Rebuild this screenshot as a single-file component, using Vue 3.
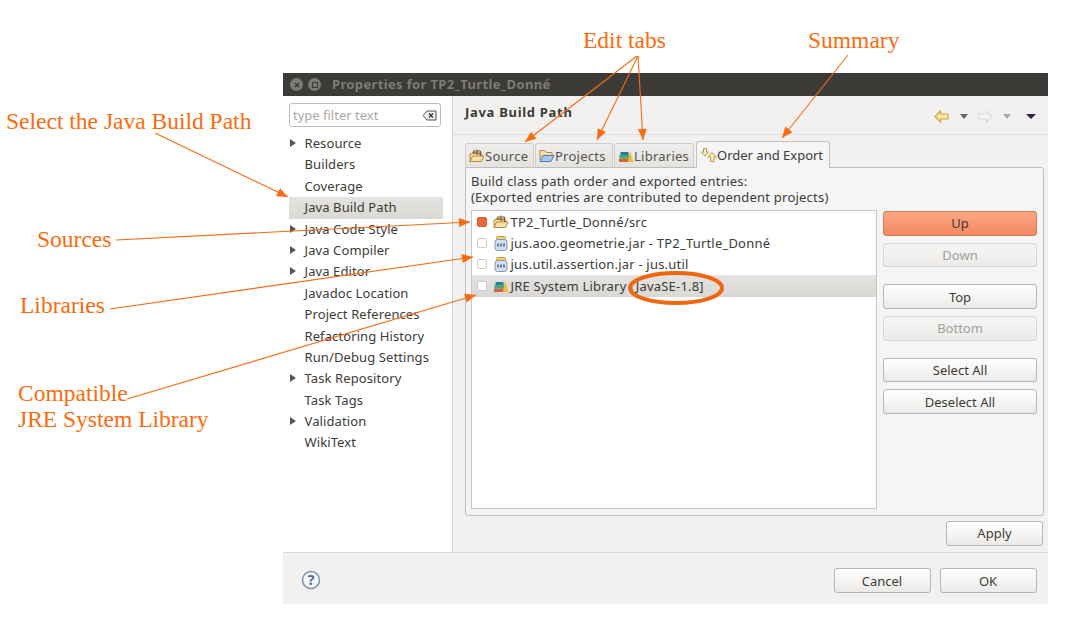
<script setup>
const tree = [
  { t: 'Resource', a: 1 }, { t: 'Builders' }, { t: 'Coverage' }, { t: 'Java Build Path', s: 1 },
  { t: 'Java Code Style', a: 1 }, { t: 'Java Compiler', a: 1 }, { t: 'Java Editor', a: 1 },
  { t: 'Javadoc Location' }, { t: 'Project References' }, { t: 'Refactoring History' },
  { t: 'Run/Debug Settings' }, { t: 'Task Repository', a: 1 }, { t: 'Task Tags' },
  { t: 'Validation', a: 1 }, { t: 'WikiText' }
]
const tabs = [
  { t: 'Source', i: 'src', w: 69 }, { t: 'Projects', i: 'prj', w: 78 }, { t: 'Libraries', i: 'lib', w: 80 }
]
const rows = [
  { t: 'TP2_Turtle_Donné/src', i: 'src', on: 1 },
  { t: 'jus.aoo.geometrie.jar - TP2_Turtle_Donné', i: 'jar' },
  { t: 'jus.util.assertion.jar - jus.util', i: 'jar' },
  { t: 'JRE System Library [JavaSE-1.8]', i: 'lib', sel: 1 }
]
const labels = [
  { t: 'Edit tabs', x: 583, y: 27 }, { t: 'Summary', x: 808, y: 27 },
  { t: 'Select the Java Build Path', x: 6, y: 108 }, { t: 'Sources', x: 37, y: 226 },
  { t: 'Libraries', x: 20, y: 292 }, { t: 'Compatible', x: 18, y: 380 },
  { t: 'JRE System Library', x: 18, y: 406 }
]
const arrows = [
  [155, 133, 288, 197], [116, 240, 470, 222], [110, 309, 473, 257], [127, 399, 476, 295],
  [637, 56, 525, 142], [638, 56, 597, 140], [638, 56, 643, 140], [848, 55, 782, 138]
]
function head(a) {
  const [x1, y1, x2, y2] = a
  const l = Math.hypot(x2 - x1, y2 - y1)
  const ux = (x2 - x1) / l, uy = (y2 - y1) / l
  const bx = x2 - ux * 11, by = y2 - uy * 11
  return `${x2},${y2} ${bx - uy * 4.5},${by + ux * 4.5} ${bx + uy * 4.5},${by - ux * 4.5}`
}
</script>

<template>
  <div class="page">
    <section class="window">
      <header class="titlebar">
        <span class="wbtn"><svg width="12" height="12" viewBox="0 0 12 12"><path d="M4 4l4 4M8 4l-4 4" stroke="#3c3b37" stroke-width="1.4"/></svg></span>
        <span class="wbtn"><svg width="12" height="12" viewBox="0 0 12 12"><rect x="3.5" y="3.5" width="5" height="5" fill="none" stroke="#3c3b37"/></svg></span>
        <span class="wtitle">Properties for TP2_Turtle_Donné</span>
      </header>

      <div class="main">
        <aside class="side">
          <div class="filter">
            <span>type filter text</span>
            <svg width="15" height="11" viewBox="0 0 15 11"><path d="M1 5.5L5 1h9v9H5z" fill="#eee" stroke="#555"/><path d="M7 3.5l4 4M11 3.5l-4 4" stroke="#333" stroke-width="1.3"/></svg>
          </div>
          <ul class="tree">
            <li v-for="n in tree" :key="n.t" :class="['node', { selected: n.s }]">
              <i v-if="n.a" class="twist"></i>{{ n.t }}
            </li>
          </ul>
        </aside>

        <div class="content">
          <div class="head">
            <h1>Java Build Path</h1>
            <div class="nav">
              <svg width="15" height="13" viewBox="0 0 15 13"><path d="M1 6.500L6.500 1v3h7.500v5H6.500v3z" fill="#fdeaa8" stroke="#d9a13a" stroke-width="1.200"/></svg>
              <i class="drop dark"></i>
              <svg width="15" height="13" viewBox="0 0 15 13"><path d="M14 6.500L8.500 1v3H1v5h7.500v3z" fill="#f4f4f4" stroke="#dcdcdc" stroke-width="1.200"/></svg>
              <i class="drop pale"></i>
              <i class="drop navy"></i>
            </div>
          </div>

          <div class="body">
            <div class="tabs">
              <div v-for="t in tabs" :key="t.t" class="tab" :style="{ width: t.w + 'px' }">
                <svg v-if="t.i === 'src'" class="ico" width="16" height="14" viewBox="0 0 16 14"><path d="M1 12.500V5h1l1-1h4l1 1h5v2" fill="#f3dca6" stroke="#b58a45"/><path d="M1 12.500L3.500 7H15l-2.500 5.500z" fill="#f6e0a8" stroke="#b58a45"/><path d="M4.500 5V2h7v5M8 .5V6M3.500 4h9" stroke="#7c5a25" fill="none"/></svg>
                <svg v-else-if="t.i === 'prj'" class="ico" width="16" height="14" viewBox="0 0 16 14"><path d="M1 11V1.500h5l1.500 2H13V6" fill="#f3dca6" stroke="#b58a45"/><path d="M1 12.500L4 6.500h11l-3 6z" fill="#a9c4ec" stroke="#5577b0"/></svg>
                <svg v-else class="ico" width="16" height="14" viewBox="0 0 16 14"><rect x="1" y="9.500" width="10" height="3.500" fill="#c9683f"/><rect x="1.500" y="6" width="9.500" height="3.500" fill="#49a578"/><rect x="2.500" y="3" width="8" height="3" fill="#2f7a96"/><path d="M10 13L12 1.500 15.500 13z" fill="#eebf45"/></svg>
                <span class="tt">{{ t.t }}</span>
              </div>
              <div class="tab active">
                <svg class="ico" width="16" height="14" viewBox="0 0 16 14"><path d="M2.500.5h3v3.500h2L4 8 .5 4h2z" fill="#fbeeb5" stroke="#b58a45" stroke-width=".9"/><path d="M11 4.500l4.500 4.500h-2.500v4.500H9.500V9H7z" fill="#fbeeb5" stroke="#b58a45" stroke-width=".9"/></svg>
                Order and Export
              </div>
            </div>

            <div class="panel">
              <p class="desc">Build class path order and exported entries:<br>(Exported entries are contributed to dependent projects)</p>
              <div class="split">
                <div class="list">
                  <div v-for="r in rows" :key="r.t" :class="['row', { sel: r.sel }]">
                    <span :class="['check', { on: r.on }]"></span>
                    <svg v-if="r.i === 'src'" class="ri" width="16" height="14" viewBox="0 0 16 14"><path d="M1 12.500V5h1l1-1h4l1 1h5v2" fill="#f3dca6" stroke="#b58a45"/><path d="M1 12.500L3.500 7H15l-2.500 5.500z" fill="#f6e0a8" stroke="#b58a45"/><path d="M4.500 5V2h7v5M8 .5V6M3.500 4h9" stroke="#7c5a25" fill="none"/></svg>
                    <svg v-else-if="r.i === 'jar'" class="ri" width="16" height="15" viewBox="0 0 16 15"><rect x="3.500" y="0.500" width="9" height="3" rx="1" fill="#f2cf6b" stroke="#c79a35"/><rect x="2" y="3.500" width="12" height="11" rx="2.500" fill="#d3deee" stroke="#8296b5"/><path d="M4 9h8" stroke="#6b7f9f" stroke-width="3" stroke-dasharray="2 1"/></svg>
                    <svg v-else class="ri" width="16" height="14" viewBox="0 0 16 14"><rect x="1" y="9.500" width="10" height="3.500" fill="#c9683f"/><rect x="1.500" y="6" width="9.500" height="3.500" fill="#49a578"/><rect x="2.500" y="3" width="8" height="3" fill="#2f7a96"/><path d="M10 13L12 1.500 15.500 13z" fill="#eebf45"/></svg>
                    <span>{{ r.t }}</span>
                  </div>
                </div>
                <div class="btns">
                  <button class="btn hot">Up</button>
                  <button class="btn off">Down</button>
                  <button class="btn gap">Top</button>
                  <button class="btn off">Bottom</button>
                  <button class="btn gap">Select All</button>
                  <button class="btn">Deselect All</button>
                </div>
              </div>
            </div>
            <div class="applyrow"><button class="btn wide">Apply</button></div>
          </div>
        </div>
      </div>

      <footer class="foot">
        <svg class="help" width="20" height="20" viewBox="0 0 20 20"><circle cx="10" cy="10" r="8.500" fill="#f4f6fa" stroke="#7f8fab" stroke-width="1.500"/><text x="10" y="15" text-anchor="middle" class="q">?</text></svg>
        <div class="footbtns">
          <button class="btn wide">Cancel</button>
          <button class="btn wide">OK</button>
        </div>
      </footer>
    </section>

    <div v-for="l in labels" :key="l.t" class="note" :style="{ left: l.x + 'px', top: l.y + 'px' }">{{ l.t }}</div>
    <svg class="over" width="1072" height="624" viewBox="0 0 1072 624">
      <g v-for="(a, i) in arrows" :key="i">
        <line :x1="a[0]" :y1="a[1]" :x2="a[2]" :y2="a[3]" stroke="#f96a10" stroke-width="1.100"/>
        <polygon :points="head(a)" fill="#f96a10"/>
      </g>
      <ellipse cx="676" cy="288" rx="46" ry="15" fill="none" stroke="#f26610" stroke-width="4"/>
    </svg>
  </div>
</template>

<style>
html, body { margin: 0; background: #fff; }
</style>

<style scoped>
.page { position: relative; width: 1072px; height: 624px; overflow: hidden; background: #fff; padding: 73px 24px 0 283px; box-sizing: border-box; font-family: "Noto Sans", sans-serif; font-size: 13px; color: #3c3b37; }
.window { width: 765px; height: 531px; display: flex; flex-direction: column; background: #f2f1f0; }
.titlebar { height: 23px; background: #3c3b37; display: flex; align-items: center; padding-left: 7px; gap: 5px; flex: none; }
.wbtn { width: 13px; height: 13px; border-radius: 50%; background: #7b7a75; display: flex; align-items: center; justify-content: center; }
.wtitle { margin: 0 0 1px 6px; color: #7d7c77; font-weight: 700; font-size: 13px; letter-spacing: .36px; }
.main { flex: 1; display: flex; min-height: 0; }
.side { background: #fff; border-right: 1px solid #d6d3cf; flex: none; padding: 7px 9px 0 6px; box-sizing: content-box; width: 154px; }
.filter { height: 22px; border: 1px solid #bfbcb7; border-radius: 3px; display: flex; align-items: center; justify-content: space-between; padding: 0 3px; box-sizing: content-box; width: 144px; color: #aaa8a4; font-size: 13px; }
.tree { list-style: none; margin: 6px 0 0; padding: 0; letter-spacing: .1px; }
.node { height: 21.4px; line-height: 21.4px; padding-left: 15.5px; position: relative; white-space: nowrap; }
.node.selected { background: linear-gradient(#e4e3e1, #d9d8d5); }
.twist { position: absolute; left: 1px; top: 6px; border-left: 6px solid #555; border-top: 4px solid transparent; border-bottom: 4px solid transparent; }
.content { flex: 1; display: flex; flex-direction: column; min-width: 0; }
.head { height: 39px; flex: none; display: flex; align-items: center; justify-content: space-between; padding: 0 12px 0 12px; border-bottom: 1px solid #e2e0dd; box-sizing: border-box; }
.head h1 { margin: 0 0 6px; font-size: 13px; font-weight: 700; letter-spacing: .7px; }
.nav { display: flex; align-items: center; gap: 10px; margin-top: 3px; }
.drop { border-top: 5px solid #666; border-left: 4px solid transparent; border-right: 4px solid transparent; width: 0; height: 0; }
.drop.dark { margin-left: 1px; }
.drop.pale { border-top-color: #aaa; }
.drop.navy { border-top-color: #2f1f55; border-left-width: 5px; border-right-width: 5px; margin-left: 5px; }
.body { flex: 1; padding: 6px 4px 0 12px; display: flex; flex-direction: column; min-height: 0; }
.tabs { display: flex; align-items: flex-end; height: 26px; gap: 1px; position: relative; z-index: 1; flex: none; }
.tab { height: 24px; padding: 0 0 0 3px; display: flex; align-items: center; border: 1px solid #d0cdc8; border-bottom: none; border-radius: 3px 3px 0 0; background: linear-gradient(#efeeec, #e4e2df); box-sizing: border-box; color: #55544f; white-space: nowrap; flex: none; }
.tt { letter-spacing: .25px; }
.tab .ico { flex: none; }
.tab.active { height: 27px; width: 134px; padding-left: 4px; margin-left: 1px; background: #f5f5f5; border-color: #c6c3be; margin-bottom: -1px; color: #3c3b37; }
.panel { height: 349px; flex: none; border: 1px solid #c0bdb8; border-radius: 0 3px 3px 3px; background: #f5f5f5; padding: 5px 6px 6px 5px; box-sizing: border-box; display: flex; flex-direction: column; }
.desc { margin: 0; line-height: 16px; letter-spacing: .22px; }
.split { flex: 1; display: flex; gap: 6px; margin-top: 5px; min-height: 0; }
.list { width: 406px; flex: none; background: #fff; border: 1px solid #c9c6c1; box-sizing: border-box; letter-spacing: .2px; }
.row { height: 21.4px; display: flex; align-items: center; padding-left: 5px; white-space: nowrap; }
.row.sel { background: linear-gradient(#e4e3e1, #d9d8d5); }
.check { width: 8px; height: 8px; border: 1px solid #cfccc8; border-radius: 2px; background: #fff; flex: none; margin-right: 6px; }
.check.on { background: #e9683c; border-color: #d95c30; }
.ri { margin-right: 1.5px; flex: none; }
.btns { width: 154px; flex: none; display: flex; flex-direction: column; gap: 7px; padding-top: 1px; }
.btn { height: 24.7px; width: 100%; flex: none; font: 13px "Noto Sans", sans-serif; color: #3c3b37; border: 1px solid #b8b5b0; border-radius: 3px; background: linear-gradient(#fff, #f4f3f2 60%, #eceae8); padding: 0; }
.btn.hot { background: linear-gradient(#fca684, #f4895f); border-color: #c97a58; }
.btn.off { background: linear-gradient(#f5f5f4, #ecebe9); border-color: #d8d6d2; color: #a3a19d; }
.btn.gap { margin-top: 10px; }
.btn.wide { width: 97px; }
.applyrow { display: flex; justify-content: flex-end; padding: 5px 1px 0 0; }
.foot { height: 52px; flex: none; border-top: 1px solid #dcdad6; display: flex; align-items: center; justify-content: space-between; padding: 0 11.5px 0 18px; box-sizing: border-box; }
.footbtns { display: flex; gap: 9px; margin-top: 4px; }
.help { margin-top: 2px; }
.q { font: 700 14px "Noto Sans", sans-serif; fill: #4f6690; }
.note { position: absolute; font-family: "Liberation Serif", serif; font-size: 23.5px; line-height: 26px; color: #fb6a0c; white-space: nowrap; }
.over { position: absolute; left: 0; top: 0; pointer-events: none; }
</style>
